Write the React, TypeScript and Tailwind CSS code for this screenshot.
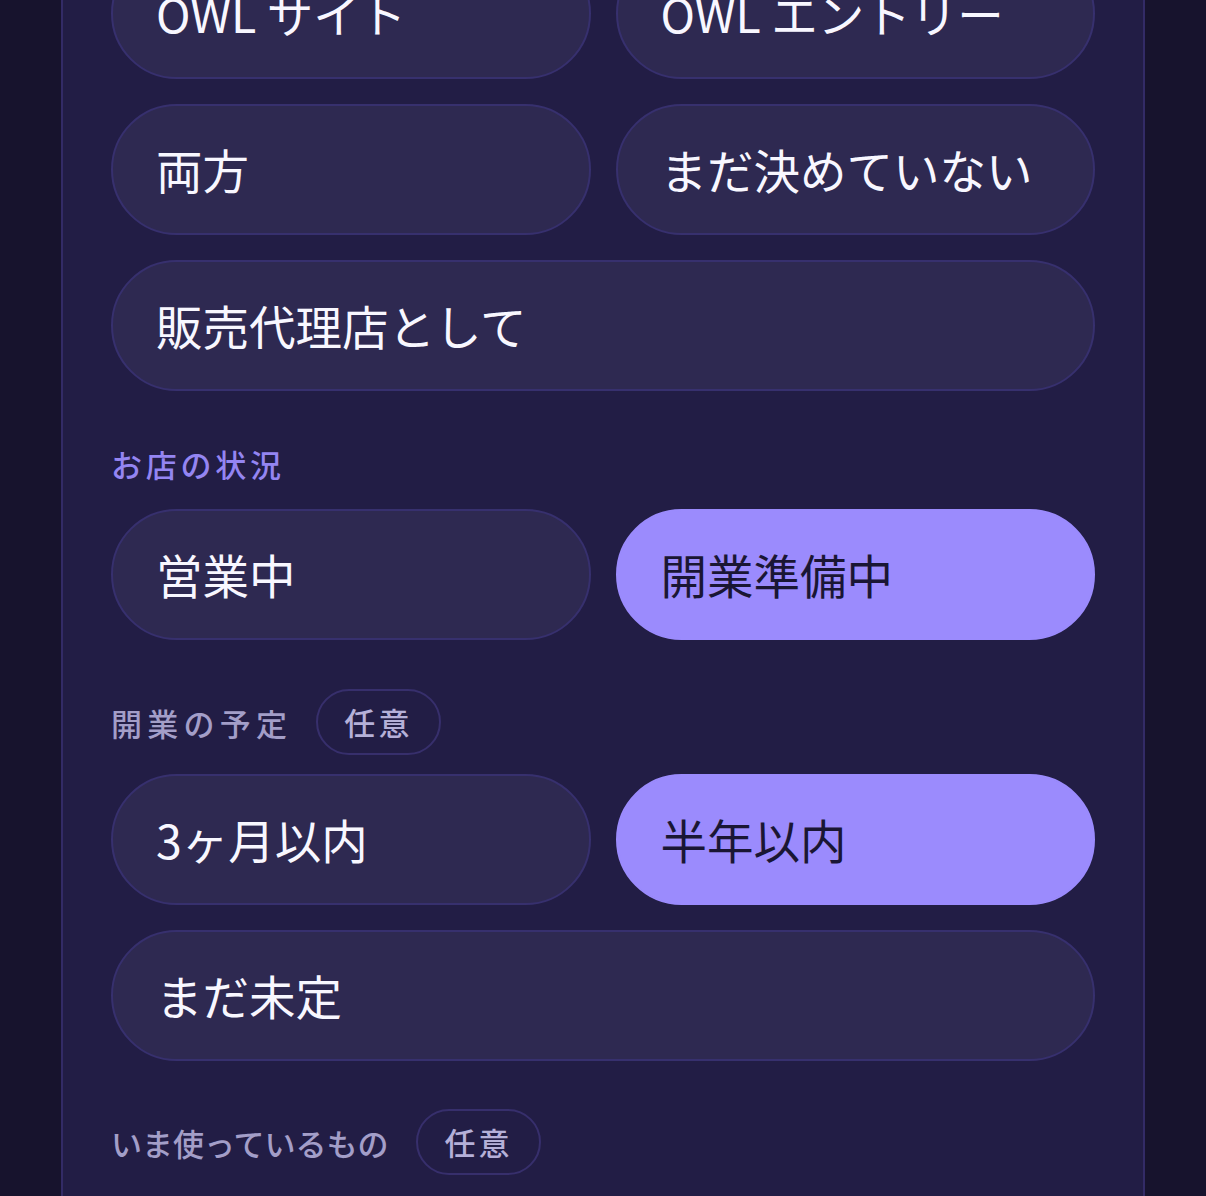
import { useState } from 'react';

type Section = {
  key: string;
  label: string;
  optional?: boolean;
  accent?: boolean;
  tracking: string;
  options: { text: string; full?: boolean }[];
};

const sections: Section[] = [
  {
    key: 'channel',
    label: '',
    tracking: '',
    options: [
      { text: 'OWL サイト' },
      { text: 'OWL エントリー' },
      { text: '両方' },
      { text: 'まだ決めていない' },
      { text: '販売代理店として', full: true },
    ],
  },
  {
    key: 'status',
    label: 'お店の状況',
    accent: true,
    tracking: 'tracking-[0.12em]',
    options: [{ text: '営業中' }, { text: '開業準備中' }],
  },
  {
    key: 'schedule',
    label: '開業の予定',
    optional: true,
    tracking: 'tracking-[0.17em]',
    options: [{ text: '3ヶ月以内' }, { text: '半年以内' }, { text: 'まだ未定', full: true }],
  },
];

function Option({ text, full, active, onClick }: { text: string; full?: boolean; active: boolean; onClick: () => void }) {
  return (
    <button
      type="button"
      onClick={onClick}
      className={
        'h-[131px] rounded-full pl-[43px] text-left text-[46.5px] leading-none ' +
        (full ? 'col-span-2 ' : '') +
        (active
          ? 'bg-[#9b8bfd] text-[#1a1634] border-2 border-[#9b8bfd]'
          : 'bg-[#2e2951] text-[#f8f7ff] border-2 border-[#37306e]')
      }
    >
      {text}
    </button>
  );
}

function Badge() {
  return (
    <span className="inline-flex h-[66px] items-center rounded-full border-2 border-[#372f6c] px-[26px] text-[31px] font-medium tracking-[0.1em] text-[#b5b0d8]">
      任意
    </span>
  );
}

export default function App() {
  const [picked, setPicked] = useState<Record<string, string>>({
    status: '開業準備中',
    schedule: '半年以内',
  });

  return (
    <div
      className="min-h-[1196px] overflow-hidden bg-[#17132d]"
      style={{ fontFamily: '"Noto Sans CJK JP", "Noto Sans", sans-serif' }}
    >
      <div className="mx-auto -mt-[102px] w-[1084px] border-2 border-[#332b66] bg-[#221d45] px-12 pt-12 pb-24">
        {sections.map((s, i) => (
          <div key={s.key} className={i > 0 ? 'mt-[49px]' : ''}>
            {s.label && (
              <div
                className={
                  'flex items-center gap-[24px] ' + (s.optional ? 'mb-[19px]' : 'mb-[22px] min-h-[47px]')
                }
              >
                <span
                  className={
                    'text-[31px] font-medium leading-none ' +
                    s.tracking +
                    ' ' +
                    (s.accent ? 'text-[#9485f2]' : 'text-[#a39ec8]')
                  }
                >
                  {s.label}
                </span>
                {s.optional && <Badge />}
              </div>
            )}
            <div className="grid grid-cols-2 gap-x-[25px] gap-y-[25px]">
              {s.options.map((o) => (
                <Option
                  key={o.text}
                  text={o.text}
                  full={o.full}
                  active={picked[s.key] === o.text}
                  onClick={() => setPicked({ ...picked, [s.key]: o.text })}
                />
              ))}
            </div>
          </div>
        ))}
        <div className="mt-[48px] flex items-center gap-[28px]">
          <span className="text-[31px] font-medium leading-none text-[#a39ec8]">いま使っているもの</span>
          <Badge />
        </div>
      </div>
    </div>
  );
}
